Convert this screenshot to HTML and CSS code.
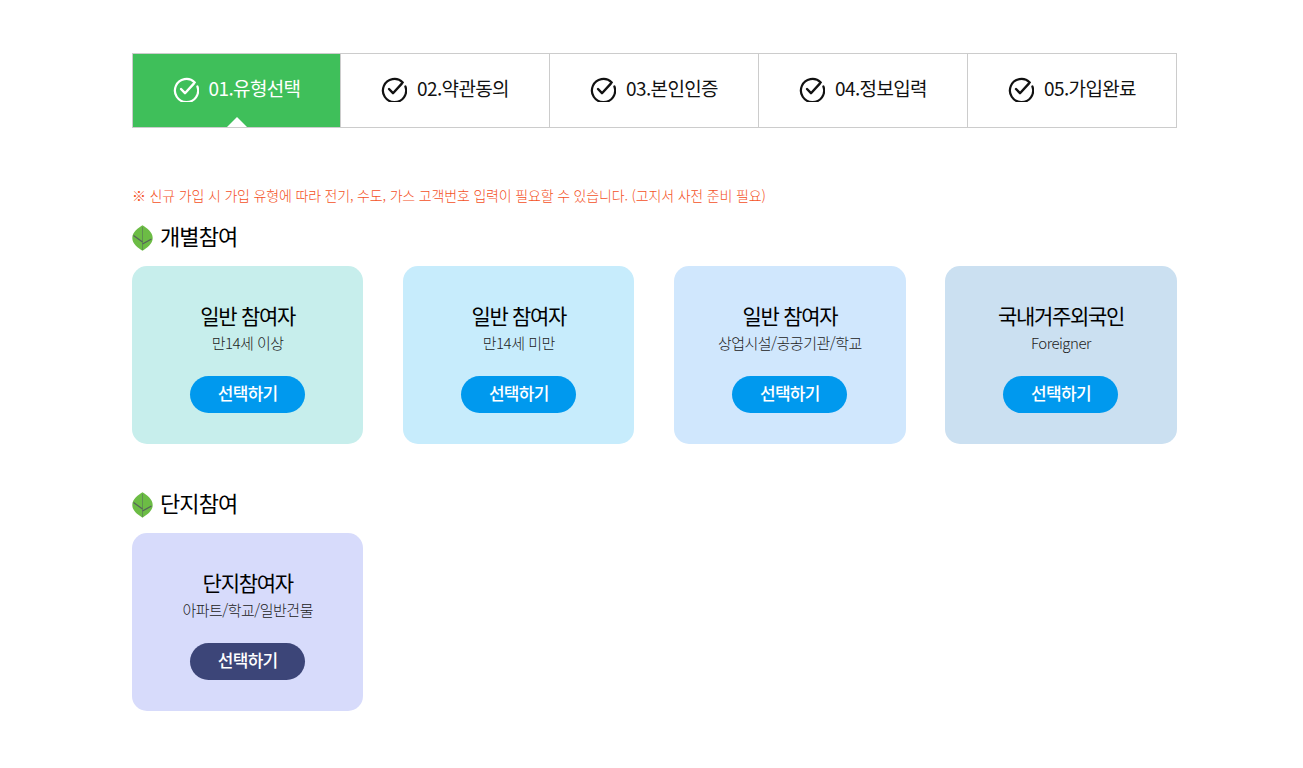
FILE: index.html
```html
<!DOCTYPE html>
<html lang="ko">
<head>
<meta charset="utf-8">
<title>회원가입</title>
<link rel="stylesheet" href="styles.css">
</head>
<body>
<svg class="defs" width="0" height="0" aria-hidden="true">
  <symbol id="check" viewBox="0 0 26 26">
    <path d="M21.8 6.400A11.600 11.600 0 1 0 24.400 10.500" fill="none" stroke="currentColor" stroke-width="2.200" stroke-linecap="round"/>
    <path d="M8 13l4 4.200 8.800-9.600" fill="none" stroke="currentColor" stroke-width="2.400" stroke-linecap="round" stroke-linejoin="round"/>
  </symbol>
  <symbol id="leaf" viewBox="0 0 21 26">
    <path d="M10.500 .3C14.500 3 20.700 6.800 20.700 13c0 6.200-6.200 10-10.200 12.700C6.500 23 .3 19.200 .3 13 .3 6.800 6.500 3 10.500 .3z" fill="#6cbc45"/>
    <path d="M10.500 2V25" fill="none" stroke="#5f8f52" stroke-width="1"/>
    <path d="M1.500 10.500 10.500 17M19.500 14 10.500 19" fill="none" stroke="#56635a" stroke-width="1.300"/>
  </symbol>
</svg>
<main class="page">
  <ol class="steps">
    <li class="step is-active"><svg class="check"><use href="#check"/></svg><span class="step-label">01.유형선택</span></li>
    <li class="step"><svg class="check"><use href="#check"/></svg><span class="step-label">02.약관동의</span></li>
    <li class="step"><svg class="check"><use href="#check"/></svg><span class="step-label">03.본인인증</span></li>
    <li class="step"><svg class="check"><use href="#check"/></svg><span class="step-label">04.정보입력</span></li>
    <li class="step"><svg class="check"><use href="#check"/></svg><span class="step-label">05.가입완료</span></li>
  </ol>

  <p class="notice">※ 신규 가입 시 가입 유형에 따라 전기, 수도, 가스 고객번호 입력이 필요할 수 있습니다. (고지서 사전 준비 필요)</p>

  <h2 class="section-title"><svg class="leaf"><use href="#leaf"/></svg>개별참여</h2>
  <div class="cards">
    <section class="card mint"><h3>일반 참여자</h3><p>만14세 이상</p><a class="btn">선택하기</a></section>
    <section class="card sky"><h3>일반 참여자</h3><p>만14세 미만</p><a class="btn">선택하기</a></section>
    <section class="card blue"><h3>일반 참여자</h3><p>상업시설/공공기관/학교</p><a class="btn">선택하기</a></section>
    <section class="card steel"><h3>국내거주외국인</h3><p>Foreigner</p><a class="btn">선택하기</a></section>
  </div>

  <h2 class="section-title second"><svg class="leaf"><use href="#leaf"/></svg>단지참여</h2>
  <div class="cards">
    <section class="card lilac"><h3>단지참여자</h3><p>아파트/학교/일반건물</p><a class="btn navy">선택하기</a></section>
  </div>
</main>
</body>
</html>
```

FILE: styles.css
```css
* { box-sizing: border-box; }
html, body { margin: 0; padding: 0; background: #fff; }
body { font-family: "Noto Sans CJK KR", "Noto Sans", sans-serif; color: #000; }
.defs { position: absolute; }
.page { width: 1045px; margin-left: 132px; padding-top: 53px; }

.steps {
  display: flex; list-style: none; margin: 0; padding: 0;
  height: 75px; border: 1px solid #ccc;
}
.step {
  flex: 0 0 209px; position: relative;
  display: flex; align-items: center; justify-content: center; gap: 10px;
  padding-bottom: 3px;
  border-right: 1px solid #ccc;
  font-size: 19px; letter-spacing: -0.65px; color: #111;
}
.step:first-child { flex-basis: 208px; }
.step:last-child { flex-basis: 208px; border-right: 0; }
.step-label { padding-bottom: 3px; }
.step.is-active { background: #3fbf5a; color: #fff; }
.step.is-active::after {
  content: ""; position: absolute; left: 50%; bottom: 0; margin-left: -10px;
  border: 10px solid transparent; border-top: 0; border-bottom: 10px solid #fff;
}
.check { width: 26px; height: 26px; flex: none; }

.notice {
  margin: 57px 0 0; font-size: 14px; line-height: 20px; letter-spacing: -0.17px;
  font-weight: 300; color: #f4511e;
}
.section-title {
  display: flex; align-items: center; gap: 7px;
  margin: 15px 0 16px; height: 30px;
  font-size: 22px; font-weight: 400; letter-spacing: -0.9px; line-height: 30px;
}
.section-title.second { margin-top: 43px; }
.leaf { width: 21px; height: 26px; flex: none; margin-top: 5px; }

.cards { display: flex; gap: 39.75px; }
.card {
  width: 231.35px; height: 178px; border-radius: 15px;
  padding-top: 33px; text-align: center;
  display: flex; flex-direction: column; align-items: center;
}
.card h3 { margin: 0; font-size: 21px; font-weight: 400; line-height: 32px; letter-spacing: -1.3px; }
.card p { margin: 2px 0 0; font-size: 15px; font-weight: 300; line-height: 20px; letter-spacing: -0.5px; color: #222; }
.btn {
  margin-top: 23px; width: 115px; height: 37px; border-radius: 19px;
  background: #0099ee; color: #fff;
  font-size: 17px; font-weight: 500; line-height: 34px; letter-spacing: -0.7px;
}
.btn.navy { background: #3c4578; }
.mint { background: #c7eeec; }
.sky { background: #c7ecfc; }
.blue { background: #d0e7fd; }
.steel { background: #cbe0f1; }
.lilac { background: #d7dbfb; }
```
